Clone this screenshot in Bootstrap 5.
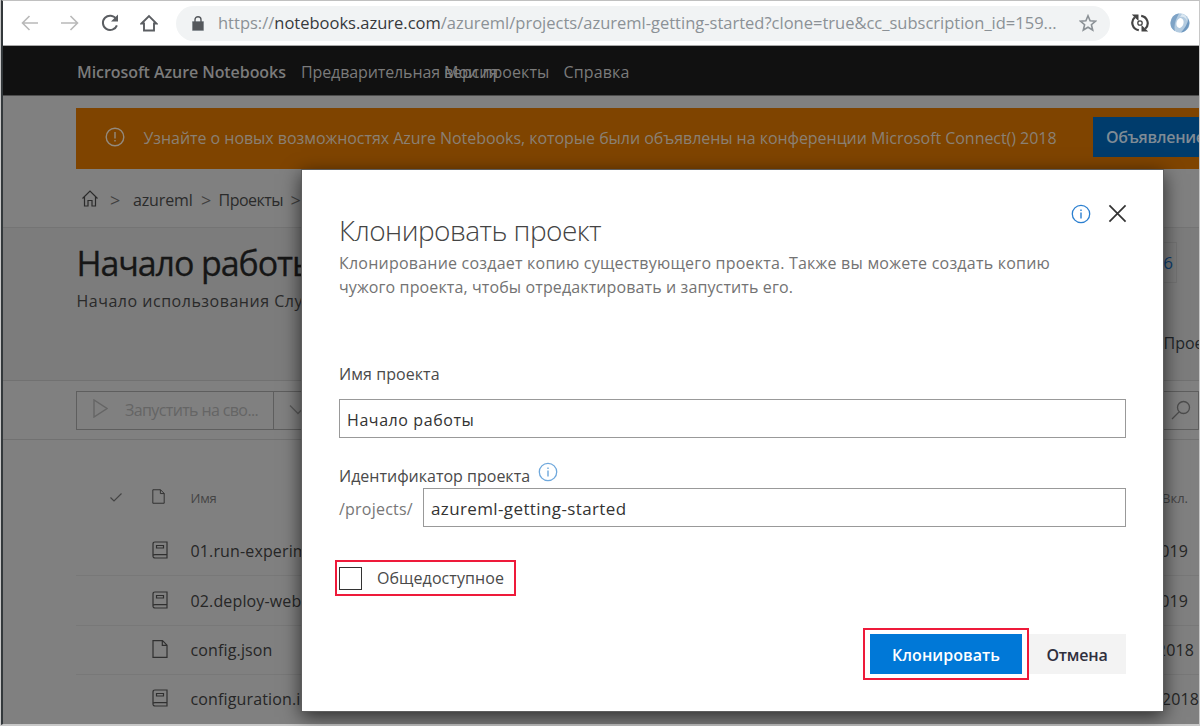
<!DOCTYPE html>
<html lang="ru">
<head>
<meta charset="utf-8">
<meta name="viewport" content="width=device-width, initial-scale=1">
<title>Microsoft Azure Notebooks</title>
<link href="https://cdn.jsdelivr.net/npm/bootstrap@5.3.0/dist/css/bootstrap.min.css" rel="stylesheet">
<style>
body{font-family:"Open Sans","Noto Sans",sans-serif;font-size:16px;line-height:24px;height:726px;overflow:hidden;background:#c8c8c8}
svg{display:block;flex:none;fill:none;stroke:currentColor}
span,h1,h2,a{white-space:nowrap}

/* browser window */
.window-frame{height:725px;width:1199px;margin-left:1px;border-top:1px solid #c0c0c0;border-left:2px solid #33383b;border-right:1px solid #c8c8c8;border-bottom:1px solid #c8c8c8;background:#808080;overflow:hidden}
.chrome-bar{height:45px;background:#fff;border-bottom:1px solid #a9a9a9;padding-left:18px;color:#5b5e62}
.omnibox{background:#f1f3f4;border-radius:18px;height:35px;width:934px;color:#8b9196;font-size:16.5px;padding-left:16px}
.omnibox .host{color:#36393c}

/* page header */
.site-nav{height:50px;background:#111;color:#7b7b7b;border-bottom:1px solid #4c4c4c;padding:2px 0 0 74px}
.brand-name{font-weight:600;width:224px;letter-spacing:-.07px}
.preview-tag{width:143px;letter-spacing:-.11px}
.notice{background:#7f4400;height:61px;margin:12px 0 0 73px;color:#8a8074}
.notice-text{width:949.500px;letter-spacing:-.046px;padding-bottom:1px}
.notice-btn{background:#003c6c;height:40px;color:#7f8b95;font-weight:600;padding-left:13px;width:120px;letter-spacing:-.3px;margin-bottom:3px}
.crumbs{height:59px;color:#2b2b2b;padding:4px 0 0 79px;border-bottom:1px solid #747474}
.crumb-sep{color:#404040}
.hero{height:153px;background:#7c7c7c;border-bottom:1px solid #717171;padding:14px 0 0 73.500px}
.hero h1{font-size:34px;line-height:43px;color:#161616;margin:0;letter-spacing:-1.1px;-webkit-text-stroke:.3px #161616}
.hero-sub{color:#2a2a2a;letter-spacing:.51px;line-height:32px}
.stat-box{border:1px solid #737373;width:60px;height:41px;color:#0d3f70;padding-right:3px;font-size:17px}
.hero-side{width:122px}

/* toolbar */
.tool-strip{height:59px;border-bottom:1px solid #717171;padding-left:73px}
.run-btn{border:1px solid #5e5e5e;height:39px;width:198px;color:#656565;padding-left:15px;letter-spacing:-.62px}
.run-drop{border:1px solid #5e5e5e;border-left:0;height:39px;width:48px;color:#5a5a5a;padding-left:15px}
.search-box{border:1px solid #5e5e5e;height:39px;width:160px;color:#4c4c4c;padding-right:6px}

/* file list */
.file-list{margin-left:73px;color:#262626}
.files-head{height:87px;padding-top:30px;font-size:13px;color:#444}
.file-row{height:49.4px;border-bottom:1px solid #787878;letter-spacing:.14px}
.cell-check{width:76px;padding-left:34px}
.cell-icon{width:38.500px;padding-bottom:2px;color:#303030}

/* dialog */
.clone-dialog{left:302px;top:170px;width:861px;height:541px;background:#fff;box-shadow:0 0 0 1px #5d5d5d,0 5px 18px 1px rgba(0,0,0,.65);color:#4a4a4a;padding:0 37px}
.clone-dialog h2{font-weight:300;font-size:28px;line-height:36px;margin:42px 0 0;color:#444;letter-spacing:-.54px}
.lead-copy{color:#737373;height:49px;margin-top:3px}
.field-box{border:1px solid #999;height:39px;padding:2px 7px 0;color:#333}
.blue-btn,.grey-btn{height:40px;border-radius:0;padding:1px 0 0;border:0;font-weight:600;line-height:38px}
.blue-btn,.blue-btn:hover{background:#0078d7;color:#fff;width:152px;letter-spacing:.05px}
.grey-btn,.grey-btn:hover{background:#f3f3f3;color:#2f2f3d;width:97px;letter-spacing:-.2px;padding-right:1px}
.outline-red{border:2px solid #ee1a3a}
.public-opt{width:181px;height:36px;margin:33px 0 0 -4px}
.check-square{width:23px;height:23px;border:1.5px solid #333;margin-left:2px}
.clone-wrap{width:166px;height:52px}
</style>
</head>
<body>
<svg width="0" height="0" class="position-absolute">
  <symbol id="nb" viewBox="0 0 16 18"><path d="M3 1h12v16H3.200Q1 17 1 15V3Q1 1 3 1ZM1.200 14.300Q1.500 13.700 3 13.700H15M4.500 4.500h7v2.500h-7z" stroke-width="1.200"/></symbol>
  <symbol id="doc" viewBox="0 0 16 18"><path d="M1 .700h9.500L15 5.200V17.300H1zM10.300.700v4.700H15" stroke-width="1.200"/></symbol>
  <symbol id="info" viewBox="0 0 20 20"><circle cx="10" cy="10" r="8.700" stroke-width="1.300"/><path d="M10 8.500v6M10 5.500v1.500" stroke-width="1.400"/></symbol>
</svg>
<div class="window-frame">
  <div class="chrome-bar d-flex align-items-center">
    <svg width="18" height="18" viewBox="1 0 18 18" stroke-width="1.600"><path d="M18 9H3M9.500 2 2.500 9l7 7" stroke="#b9b9b9"/></svg>
    <svg style="margin:0 23px" width="16" height="18" viewBox="1 0 16 18" overflow="visible" stroke-width="1.600"><path d="M0 9h16M9.500 2l7 7-7 7" stroke="#b9b9b9"/></svg>
    <svg width="18" height="18" viewBox="0 0 18 18" stroke-width="2"><path d="M15.200 5A7.200 7.200 0 1 0 15.900 11.300"/><path d="M17 .500V7.500H10z" fill="#5b5e62" stroke="none"/></svg>
    <svg style="margin:0 18px 0 21px" width="18" height="18" viewBox="0 0 18 18" stroke-width="1.900"><path d="M1.500 9.500 9 2l7.500 7.500H14V16.500H4V9.500z"/></svg>
    <div class="omnibox d-flex align-items-center">
      <svg width="12" height="15" viewBox="0 0 12 15" stroke="none"><path d="M1 5.500h10q.700 0 .700.700v7.500q0 .800-.700.800H1q-.700 0-.700-.800V6.200q0-.700.700-.700z" fill="#55585c"/><path d="M3 6V3.700a3 3 0 0 1 6 0V6" stroke="#55585c" stroke-width="1.400"/></svg>
      <span style="margin-left:14px">https://<span class="host">notebooks.azure.com</span>/azureml/projects/azureml-getting-started?clone=true&amp;cc_subscription_id=159...</span>
      <svg style="margin-left:22px" width="18" height="18" viewBox="0 0 18 18" stroke-width="1.600"><path d="m9 1.800 2.100 5 5.400.400-4.100 3.500 1.300 5.300L9 13.200 4.300 16l1.300-5.300L1.500 7.200l5.400-.400z"/></svg>
    </div>
    <svg style="margin-left:21px;color:#444" width="18" height="20" viewBox="0 0 18 20" stroke-width="2.200"><path d="M3.800 4.200A7.500 7.500 0 0 0 7.800 17.200M14.200 15.800A7.500 7.500 0 0 0 10.200 2.800"/><path d="M.800 1.500H7.500V8zM17.200 18.500H10.500V12z" fill="#444" stroke="none"/><circle cx="9" cy="10" r="2.200" stroke-width="1.300"/></svg>
    <svg style="margin-left:21px" width="20" height="20" viewBox="0 0 20 20"><circle cx="10" cy="10" r="9.700" fill="#b3cbe0" stroke="none"/><path d="M9 .500A9.700 9.700 0 0 0 5 18.200Q3 11 9 .500z" fill="#7ea3c6" stroke="none"/><path d="M11 19.500A9.700 9.700 0 0 0 18.500 6Q17 13 11 19.500z" fill="#6f98bf" stroke="none"/><path d="M12 1q5 1 5 7-2-5-7-4z" fill="#dce8f2" stroke="none"/><ellipse cx="10" cy="10" rx="3.500" ry="5" fill="#fff" stroke="none" transform="rotate(15 10 10)"/></svg>
  </div>

  <nav class="site-nav navbar flex-nowrap justify-content-start">
    <span class="brand-name">Microsoft Azure Notebooks</span>
    <span class="preview-tag">Предварительная версия</span>
    <span style="width:119.500px;letter-spacing:.05px">Мои проекты</span>
    <span style="letter-spacing:.13px">Справка</span>
  </nav>

  <div class="notice d-flex align-items-center">
    <svg style="margin:0 19px 4px 28.500px" width="20" height="20" viewBox="0 0 20 20" stroke-width="1.400"><circle cx="10" cy="10" r="8.800" stroke="#938a7e"/><path d="M10 5v6.500M10 13v1.600" stroke="#938a7e"/></svg>
    <span class="notice-text flex-shrink-0">Узнайте о новых возможностях Azure Notebooks, которые были объявлены на конференции Microsoft Connect() 2018</span>
    <a class="notice-btn flex-shrink-0 d-flex align-items-center text-decoration-none">Объявление</a>
  </div>

  <div class="crumbs d-flex align-items-center">
    <svg width="16" height="17" viewBox="0 0 16 17" style="margin-bottom:4px" stroke-width="1.200"><path d="M.500 8.500 8 1l7.500 7.500M2.500 7v9H6v-5.500h4V16h3.500V7"/></svg>
    <span class="crumb-sep" style="margin-left:12px;width:23px;font-size:18px">&gt;</span>
    <span style="width:68px;letter-spacing:-.15px">azureml</span>
    <span class="crumb-sep" style="width:17.500px;font-size:18px">&gt;</span>
    <span style="width:72px;letter-spacing:-.5px">Проекты</span>
    <span class="crumb-sep" style="font-size:18px">&gt;</span>
  </div>

  <div class="hero d-flex justify-content-between">
    <div>
      <h1>Начало работы</h1>
      <span class="hero-sub">Начало использования Службы</span>
    </div>
    <div class="hero-side">
      <div style="margin-left:40px"><div class="stat-box d-flex align-items-center justify-content-end">6</div></div>
      <div style="margin:48px 0 0 86.500px"><span>Проект</span></div>
    </div>
  </div>

  <div class="tool-strip d-flex align-items-center">
    <div class="run-btn d-flex align-items-center">
      <svg width="15" height="19" viewBox="0 0 15 19" style="margin:0 17px 3px 1px" stroke-width="1.400"><path d="M1 1v17l13-8.500z"/></svg>
      <span>Запустить на сво...</span>
    </div>
    <div class="run-drop d-flex align-items-center"><svg width="18" height="10" viewBox="0 0 18 10" stroke-width="1.400"><path d="m1 .500 8 8 8-8"/></svg></div>
    <div class="search-box ms-auto d-flex align-items-center justify-content-end"><svg width="22" height="20" viewBox="0 0 22 20" stroke-width="1.300"><circle cx="13.500" cy="7.500" r="6"/><path d="M9 12 2 19"/></svg></div>
  </div>

  <div class="file-list">
    <div class="files-head d-flex align-items-start">
      <div class="cell-check" style="padding-top:23px"><svg width="12" height="9" viewBox="0 0 12 9" stroke-width="1.200"><path d="m.500 4.500 3.500 3.500L11.500.500"/></svg></div>
      <div class="cell-icon" style="padding-top:19px"><svg width="13" height="15"><use href="#doc"/></svg></div>
      <span style="padding-top:16px;letter-spacing:-.2px">Имя</span>
      <span class="ms-auto" style="padding:16px 11px 0 0">Вкл.</span>
    </div>
    <div class="file-row d-flex align-items-center"><div class="cell-check"></div><div class="cell-icon"><svg width="16" height="18"><use href="#nb"/></svg></div><span>01.run-experiment.ipynb</span><span class="ms-auto" style="padding-right:11px">2019</span></div>
    <div class="file-row d-flex align-items-center"><div class="cell-check"></div><div class="cell-icon"><svg width="16" height="18"><use href="#nb"/></svg></div><span>02.deploy-webservice.ipynb</span><span class="ms-auto" style="padding-right:11px">2019</span></div>
    <div class="file-row d-flex align-items-center"><div class="cell-check"></div><div class="cell-icon"><svg width="16" height="18"><use href="#doc"/></svg></div><span>config.json</span><span class="ms-auto" style="padding-right:5px">2018</span></div>
    <div class="file-row d-flex align-items-center"><div class="cell-check"></div><div class="cell-icon"><svg width="16" height="18"><use href="#nb"/></svg></div><span>configuration.ipynb</span><span class="ms-auto">2018</span></div>
  </div>
</div>

<div class="clone-dialog position-absolute" role="dialog">
  <div class="d-flex">
    <h2>Клонировать проект</h2>
    <div class="ms-auto d-flex" style="margin:34px -1px 0 0">
      <svg width="20" height="20" style="color:#2b7fd0;margin-right:17px"><use href="#info"/></svg>
      <svg width="19" height="19" viewBox="0 0 20 20" stroke-width="1.800" style="color:#333"><path d="m1.500 1.500 17 17M18.500 1.500l-17 17"/></svg>
    </div>
  </div>
  <div class="lead-copy">
    <span class="d-block" style="letter-spacing:.218px">Клонирование создает копию существующего проекта. Также вы можете создать копию</span>
    <span class="d-block" style="letter-spacing:.118px">чужого проекта, чтобы отредактировать и запустить его.</span>
  </div>
  <div style="margin-top:62px"><span style="letter-spacing:.07px">Имя проекта</span></div>
  <div class="field-box d-flex align-items-center" style="margin-top:13px"><span style="letter-spacing:.58px">Начало работы</span></div>
  <div class="d-flex" style="margin-top:24px;height:26px">
    <span style="padding-top:2px">Идентификатор проекта</span>
    <svg width="20" height="20" style="margin-left:8px;color:#6fa8dc"><use href="#info"/></svg>
  </div>
  <div class="d-flex align-items-center">
    <span style="width:84px;letter-spacing:.22px;color:#777;padding-top:2px">/projects/</span>
    <div class="field-box flex-fill d-flex align-items-center"><span style="font-size:17px;letter-spacing:.38px">azureml-getting-started</span></div>
  </div>
  <div class="public-opt outline-red d-flex align-items-center">
    <div class="check-square"></div>
    <span style="margin:0 0 1px 15px;letter-spacing:.08px">Общедоступное</span>
  </div>
  <div class="d-flex align-items-center justify-content-end" style="margin-top:32px">
    <div class="clone-wrap outline-red d-flex align-items-center justify-content-center"><button class="btn blue-btn">Клонировать</button></div>
    <button class="btn grey-btn">Отмена</button>
  </div>
</div>
</body>
</html>
